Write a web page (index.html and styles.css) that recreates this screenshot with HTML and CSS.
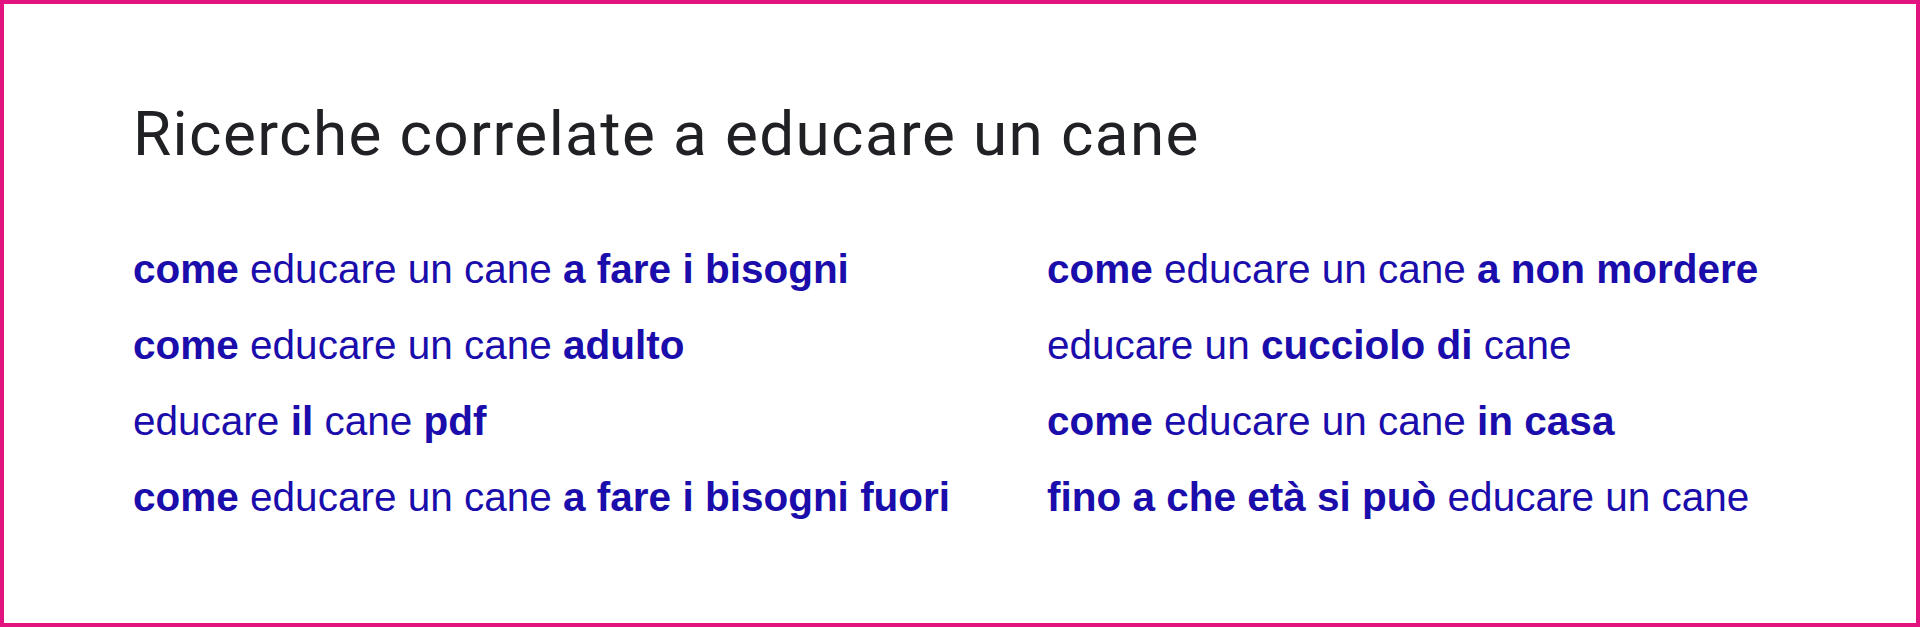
FILE: index.html
```html
<!DOCTYPE html>
<html lang="it">
<head>
    <meta charset="UTF-8">
    <meta name="viewport" content="width=device-width, initial-scale=1.0">
    <title>Ricerche correlate</title>
    <link rel="stylesheet" href="styles.css">
</head>
<body>
    <div class="frame">
        <section class="related">
            <h2 class="related-title">Ricerche correlate a educare un cane</h2>

            <!-- due colonne di suggerimenti -->
            <div class="related-grid">
                <a class="related-link" href="#"><b>come</b> educare un cane <b>a fare i bisogni</b></a>
                <a class="related-link" href="#"><b>come</b> educare un cane <b>a non mordere</b></a>
                <a class="related-link" href="#"><b>come</b> educare un cane <b>adulto</b></a>
                <a class="related-link" href="#">educare un <b>cucciolo di</b> cane</a>
                <a class="related-link" href="#">educare <b>il</b> cane <b>pdf</b></a>
                <a class="related-link" href="#"><b>come</b> educare un cane <b>in casa</b></a>
                <a class="related-link" href="#"><b>come</b> educare un cane <b>a fare i bisogni fuori</b></a>
                <a class="related-link" href="#"><b>fino a che età si può</b> educare un cane</a>
            </div>
        </section>
    </div>
</body>
</html>
```

FILE: styles.css
```css
* {
    margin: 0;
    padding: 0;
    box-sizing: border-box;
}

body {
    background-color: #ffffff;
    font-family: 'Liberation Sans', Arial, sans-serif;
}

.frame {
    width: 1920px;
    height: 627px;
    border: 4px solid #e2127f;
    background-color: #ffffff;
}

.related {
    padding: 95px 0 0 129px;
}

.related-title {
    font-family: 'Roboto', 'Open Sans', sans-serif;
    font-size: 62px;
    font-weight: 400;
    letter-spacing: 1.4px;
    line-height: 70px;
    color: #202124;
}

.related-grid {
    display: grid;
    grid-template-columns: 914px 1fr;
    margin-top: 62px;
}

.related-link {
    font-size: 40.5px;
    line-height: 76px;
    color: #1a0dab;
    text-decoration: none;
    white-space: nowrap;
}

.related-link b {
    font-weight: 700;
}
```
